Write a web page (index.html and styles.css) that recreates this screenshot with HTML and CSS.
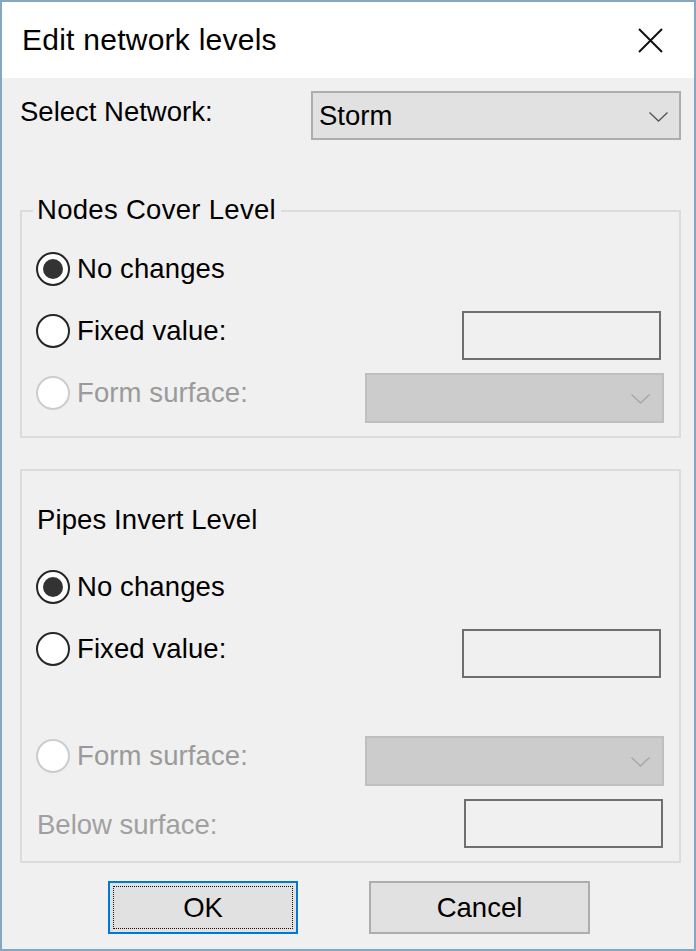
FILE: index.html
```html
<!DOCTYPE html>
<html>
<head>
<meta charset="utf-8">
<link rel="stylesheet" href="styles.css">
</head>
<body>
<div class="window">
  <div class="titlebar">
    <span class="title">Edit network levels</span>
    <svg class="close" width="25" height="25" viewBox="0 0 25 25"><path d="M1 1 L24 24 M24 1 L1 24" stroke="#111" stroke-width="2" fill="none"/></svg>
  </div>
  <div class="content">
    <div class="net-row">
      <span class="text net-label">Select Network:</span>
      <div class="select net-select">
        <span class="text">Storm</span>
        <svg class="chev" width="19" height="10" viewBox="0 0 19 10"><path d="M0.5 0.5 L9.5 9 L18.5 0.5" stroke="#555" stroke-width="1.3" fill="none"/></svg>
      </div>
    </div>

    <div class="group group-nodes">
      <span class="legend text">Nodes Cover Level</span>
      <div class="row">
        <span class="option"><span class="radio checked"></span><span class="text">No changes</span></span>
      </div>
      <div class="row">
        <span class="option"><span class="radio"></span><span class="text">Fixed value:</span></span>
        <div class="textbox tb-fixed"></div>
      </div>
      <div class="row">
        <span class="option disabled"><span class="radio"></span><span class="text">Form surface:</span></span>
        <div class="select dd-disabled">
          <svg class="chev" width="19" height="10" viewBox="0 0 19 10"><path d="M0.5 0.5 L9.5 9 L18.5 0.5" stroke="#a6a6a6" stroke-width="1.3" fill="none"/></svg>
        </div>
      </div>
    </div>

    <div class="group group-pipes">
      <div class="group-title text">Pipes Invert Level</div>
      <div class="row">
        <span class="option"><span class="radio checked"></span><span class="text">No changes</span></span>
      </div>
      <div class="row">
        <span class="option"><span class="radio"></span><span class="text">Fixed value:</span></span>
        <div class="textbox tb-fixed"></div>
      </div>
      <div class="row row-surface">
        <span class="option disabled"><span class="radio"></span><span class="text">Form surface:</span></span>
        <div class="select dd-disabled">
          <svg class="chev" width="19" height="10" viewBox="0 0 19 10"><path d="M0.5 0.5 L9.5 9 L18.5 0.5" stroke="#a6a6a6" stroke-width="1.3" fill="none"/></svg>
        </div>
      </div>
      <div class="below-row">
        <span class="text below-label">Below surface:</span>
        <div class="textbox tb-below"></div>
      </div>
    </div>

    <div class="buttons">
      <div class="button ok"><span class="text">OK</span></div>
      <div class="button cancel"><span class="text">Cancel</span></div>
    </div>
  </div>
</div>
</body>
</html>
```

FILE: styles.css
```css
html, body {
  margin: 0;
  padding: 0;
  background: #f0f0f0;
}

.window {
  width: 696px;
  height: 951px;
  box-sizing: border-box;
  border: 2px solid #84a8c3;
  background: #f0f0f0;
  font-family: "Liberation Sans", Arial, sans-serif;
  color: #000;
  overflow: hidden;
}

.text {
  font-size: 27.5px;
  line-height: 32px;
  white-space: nowrap;
}

.titlebar {
  height: 76px;
  background: #ffffff;
  display: flex;
  align-items: center;
  justify-content: space-between;
  padding-left: 20px;
  padding-right: 31px;
}

.title {
  font-size: 30px;
  line-height: 40px;
  letter-spacing: 0.25px;
  color: #000;
}

.close {
  display: block;
}

.content {
  padding: 0 13px 0 18px;
}

.net-row {
  margin-top: 13px;
  display: flex;
  justify-content: space-between;
  align-items: flex-start;
}

.net-label {
  margin-top: 5px;
}

.select {
  box-sizing: border-box;
  border: 2px solid #adadad;
  background: #e1e1e1;
  display: flex;
  align-items: center;
  justify-content: space-between;
}

.net-select {
  width: 370px;
  height: 49px;
  padding: 0 11px 0 6px;
}

.net-select .chev {
  margin-top: 2px;
}

.chev {
  display: block;
}

.group {
  position: relative;
  box-sizing: border-box;
  border: 2px solid #dcdcdc;
  padding: 0 0 0 14px;
}

.group-nodes {
  margin-top: 70px;
  padding-top: 26px;
  padding-bottom: 12px;
}

.legend {
  position: absolute;
  top: -18px;
  left: 11px;
  padding: 0 5px 0 4px;
  letter-spacing: 0.3px;
  background: #f0f0f0;
}

.group-pipes {
  margin-top: 31px;
  padding-top: 33px;
  padding-bottom: 12px;
}

.group-title {
  margin-bottom: 20px;
  margin-left: 1px;
  letter-spacing: 0.1px;
}

.row {
  height: 62px;
  display: flex;
  justify-content: space-between;
  align-items: flex-start;
}

.row-surface {
  margin-top: 45px;
}

.option {
  margin-top: 15px;
  height: 32px;
  display: flex;
  align-items: center;
  gap: 7px;
}

.option .text {
  letter-spacing: 0.1px;
}

.option.disabled .text {
  color: #9a9a9a;
}

.radio {
  position: relative;
  width: 34px;
  height: 34px;
  box-sizing: border-box;
  border-radius: 50%;
  border: 2.5px solid #262626;
  background: #ffffff;
  flex: none;
}

.radio.checked::after {
  content: "";
  position: absolute;
  left: 4.5px;
  top: 4.5px;
  width: 20px;
  height: 20px;
  border-radius: 50%;
  background: #333333;
}

.option.disabled .radio {
  border-color: #cccccc;
}

.textbox {
  box-sizing: border-box;
  border: 2px solid #6f6f6f;
  background: #f0f0f0;
}

.tb-fixed {
  margin-top: 11px;
  width: 199px;
  height: 49px;
  margin-right: 18px;
}

.dd-disabled {
  margin-top: 11px;
  width: 299px;
  height: 50px;
  margin-right: 15px;
  background: #cccccc;
  border-color: #bfbfbf;
  justify-content: flex-end;
  padding: 0 12px 0 0;
}

.dd-disabled .chev {
  margin-top: 2px;
}

.below-row {
  margin-top: 12px;
  height: 50px;
  display: flex;
  justify-content: space-between;
  align-items: flex-start;
}

.below-label {
  margin-top: 10px;
  margin-left: 1px;
  color: #a0a0a0;
}

.tb-below {
  width: 199px;
  height: 49px;
  margin-right: 16px;
}

.buttons {
  margin-top: 18px;
  padding-left: 88px;
  display: flex;
  gap: 71px;
}

.button {
  position: relative;
  box-sizing: border-box;
  height: 53px;
  background: #e1e1e1;
  border: 2px solid #adadad;
  display: flex;
  align-items: center;
  justify-content: center;
}

.button.ok {
  width: 190px;
  border-color: #0078d7;
}

.button.ok::after {
  content: "";
  position: absolute;
  inset: 3px;
  border: 1.5px dotted #111;
}

.button.cancel {
  width: 221px;
}
```
